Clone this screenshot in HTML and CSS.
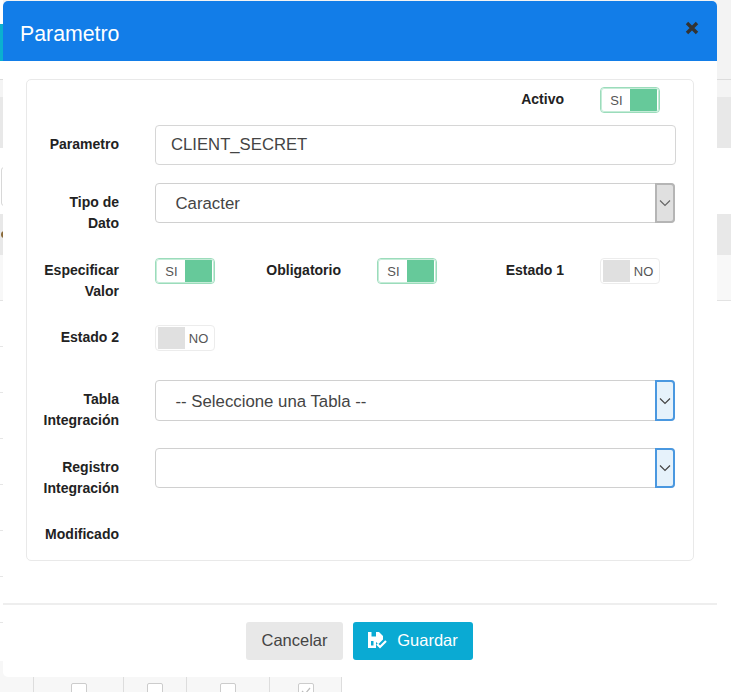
FILE: index.html
```html
<!DOCTYPE html>
<html lang="en">
<head>
  <meta charset="UTF-8">
  <meta name="viewport" content="width=device-width, initial-scale=1.0">
  <title>Parametro</title>
  <link rel="stylesheet" href="styles.css">
</head>
<body>
  <!-- page behind the modal -->
  <div class="backdrop">
    <div class="band band-top">
      <div class="left-strip"><div class="teal-tab"></div></div>
    </div>
    <div class="band band-sub"></div>
    <div class="band band-head"></div>
    <div class="band band-filter"><div class="filter-input"></div></div>
    <div class="band band-head"><span class="status-dot"></span></div>
    <div class="band band-light"></div>
    <div class="table-rows">
      <div class="table-row"></div>
      <div class="table-row"></div>
      <div class="table-row"></div>
      <div class="table-row"></div>
      <div class="table-row"></div>
      <div class="table-row"></div>
      <div class="table-row"></div>
      <div class="table-row"></div>
    </div>
    <div class="check-row">
      <div class="check-cell cell-first"></div>
      <div class="check-cell cell-a"><span class="check-box"></span></div>
      <div class="check-cell cell-b"><span class="check-box"></span></div>
      <div class="check-cell cell-c"><span class="check-box"></span></div>
      <div class="check-cell cell-d">
        <span class="check-box">
          <svg width="14" height="14" viewBox="0 0 14 14"><path d="M3 7l3 3 5-6" fill="none" stroke="#bbb" stroke-width="1.2"/></svg>
        </span>
      </div>
    </div>
  </div>

  <div class="modal">
    <header class="modal-header">
      <h1>Parametro</h1>
      <svg class="close-icon" width="14" height="14" viewBox="0 0 14 14">
        <path d="M2 2l10 10M12 2L2 12" fill="none" stroke="#333" stroke-width="3.4"/>
      </svg>
    </header>

    <div class="modal-body">
      <form class="panel">
        <label class="field-label inline col-3">Activo</label>
        <div class="toggle on"><span>SI</span><i></i></div>

        <label class="field-label row-start">Parametro</label>
        <input class="text-input wide" type="text" value="CLIENT_SECRET">

        <label class="field-label row-start">Tipo de<br>Dato</label>
        <div class="select wide">
          <span class="select-value">Caracter</span>
          <span class="select-arrow">
            <svg width="12" height="8" viewBox="0 0 12 8"><path d="M1 1.5l5 5 5-5" fill="none" stroke="#666" stroke-width="1.2"/></svg>
          </span>
        </div>

        <label class="field-label inline row-start">Especificar Valor</label>
        <div class="toggle on"><span>SI</span><i></i></div>
        <label class="field-label inline">Obligatorio</label>
        <div class="toggle on"><span>SI</span><i></i></div>
        <label class="field-label inline">Estado 1</label>
        <div class="toggle off"><i></i><span>NO</span></div>

        <label class="field-label inline row-start">Estado 2</label>
        <div class="toggle off"><i></i><span>NO</span></div>

        <label class="field-label row-start">Tabla Integración</label>
        <div class="select wide active tall">
          <span class="select-value">-- Seleccione una Tabla --</span>
          <span class="select-arrow">
            <svg width="12" height="8" viewBox="0 0 12 8"><path d="M1 1.5l5 5 5-5" fill="none" stroke="#444" stroke-width="1.2"/></svg>
          </span>
        </div>

        <label class="field-label row-start">Registro Integración</label>
        <div class="select wide active">
          <span class="select-value"></span>
          <span class="select-arrow">
            <svg width="12" height="8" viewBox="0 0 12 8"><path d="M1 1.5l5 5 5-5" fill="none" stroke="#444" stroke-width="1.2"/></svg>
          </span>
        </div>

        <label class="field-label last row-start">Modificado</label>
      </form>
    </div>

    <footer class="modal-footer">
      <button class="btn btn-cancel" type="button">Cancelar</button>
      <button class="btn btn-save" type="button">
        <svg width="20" height="17" viewBox="0 0 20 17">
          <path fill="#fff" fill-rule="evenodd" d="M0 0h11l4 4v3.500l-4.500 4.500L8 10v6H0zM3.500 0v4.500H8V0zM3 9v4.500h2.500V9z"/>
          <path d="M9 12l3 3 6-6" fill="none" stroke="#fff" stroke-width="2.200"/>
        </svg>
        Guardar
      </button>
    </footer>
  </div>
</body>
</html>
```

FILE: styles.css
```css
* {
  box-sizing: border-box;
}

html, body {
  margin: 0;
  padding: 0;
}

body {
  position: relative;
  width: 731px;
  height: 692px;
  overflow: hidden;
  font-family: "Liberation Sans", Arial, sans-serif;
  background-color: #ffffff;
  color: #333;
}

/* page behind the modal */
.backdrop {
  display: flex;
  flex-direction: column;
  height: 692px;
}

.band-top {
  height: 80px;
  background-color: #f3f3f3;
  border-bottom: 1px solid #dcdcdc;
}

.left-strip {
  width: 3px;
  height: 79px;
  padding-top: 24px;
  background-color: #ffffff;
}

.teal-tab {
  height: 37px;
  background-color: #0bb0cf;
}

.band-sub {
  height: 17px;
  background-color: #f4f4f4;
}

.band-head {
  height: 51px;
  background-color: #e8e8e8;
}

.band-filter {
  height: 66px;
  padding-top: 19px;
  background-color: #ffffff;
}

.filter-input {
  width: 40px;
  height: 39px;
  margin-left: 1px;
  border: 1px solid #d8d8d8;
  border-radius: 3px;
}

.band-head:nth-child(5) {
  height: 41px;
  padding-top: 17px;
}

.status-dot {
  display: block;
  width: 7px;
  height: 7px;
  margin-left: 1px;
  border-radius: 50%;
  background-color: #8a6a3a;
}

.band-light {
  height: 46px;
  background-color: #f8f8f8;
  border-bottom: 1px solid #e3e3e3;
}

.table-rows {
  width: 342px;
}

.table-row {
  height: 46px;
  border-bottom: 1px solid #e6e6e6;
}

.check-row {
  display: flex;
  width: 342px;
  height: 31px;
  margin-top: -8px;
  background-color: #f7f7f7;
}

.check-cell {
  display: flex;
  justify-content: center;
  padding-top: 22px;
  border-left: 1px solid #dddddd;
}

.cell-first { width: 33px; border-left: none; }
.cell-a { width: 90px; }
.cell-b { width: 63px; }
.cell-c { width: 83px; }
.cell-d { width: 73px; border-right: 1px solid #dddddd; }

.check-box {
  display: block;
  width: 16px;
  height: 16px;
  background-color: #ffffff;
  border: 1px solid #cccccc;
  border-radius: 2px;
}

.check-box svg {
  display: block;
}

/* modal */
.modal {
  position: absolute;
  left: 3px;
  top: 1px;
  width: 714px;
  height: 676px;
  display: flex;
  flex-direction: column;
  background-color: #ffffff;
  border-radius: 5px;
}

.modal-header {
  display: flex;
  align-items: center;
  justify-content: space-between;
  height: 60px;
  padding: 0 18px 0 17px;
  background-color: #127de8;
  border-radius: 5px 5px 0 0;
}

.modal-header h1 {
  margin: 6px 0 0 0;
  font-size: 21.300px;
  font-weight: normal;
  color: #ffffff;
}

.close-icon {
  margin: 0 0 6px 0;
}

.modal-body {
  padding: 18px 23px 42px 23px;
}

.panel {
  display: grid;
  grid-template-columns: 128px 60px 162px 60px 163px 60px 15px;
  grid-template-rows: 38px 58px 75px 67px 55px 68px 76px auto;
  padding: 7px 0 15.500px 0;
  border: 1px solid #e9e9e9;
  border-radius: 5px;
}

.field-label {
  padding: 9px 36px 0 0;
  font-size: 14px;
  font-weight: bold;
  line-height: 20.500px;
  text-align: right;
  color: #222;
}

.field-label.inline {
  padding-top: 2px;
}

.field-label.last {
  padding-top: 0;
}

.row-start {
  grid-column: 1;
}

.col-3 {
  grid-column: 5;
}

.wide {
  grid-column: 2 / -1;
}

/* switches */
.toggle {
  display: flex;
  align-items: center;
  width: 60px;
  height: 26px;
  padding: 2px;
  border-radius: 4px;
  font-size: 13px;
  color: #555;
}

.toggle i {
  display: block;
  width: 27px;
  height: 22px;
}

.toggle span {
  flex: 1;
  text-align: center;
}

.toggle.on {
  border: 1px solid #9bdcbb;
  outline: 1px solid #c5ecd8;
  outline-offset: -2px;
}

.toggle.on i {
  background-color: #66c99a;
}

.toggle.off {
  border: 1px solid #ececec;
}

.toggle.off i {
  background-color: #e0e0e0;
}

/* inputs */
.text-input {
  width: 521px;
  height: 40px;
  padding: 0 15px;
  font-family: inherit;
  font-size: 16.700px;
  color: #444;
  background-color: #ffffff;
  border: 1px solid #d6d6d6;
  border-radius: 4px;
}

.select {
  display: flex;
  width: 520px;
  height: 40px;
  border: 1px solid #d0d0d0;
  border-radius: 4px;
  font-size: 16.800px;
  color: #444;
}

.select.tall {
  height: 41px;
}

.select-value {
  flex: 1;
  padding: 0 0 0 19.500px;
  line-height: 40px;
}

.select.tall .select-value {
  line-height: 41px;
}

.select-arrow {
  display: flex;
  align-items: center;
  justify-content: center;
  width: 20px;
  background-color: #e0e0e0;
  border: 2px solid #b5b5b5;
  border-radius: 0 4px 4px 0;
  margin: -1px -1px -1px 0;
}

.select.active .select-arrow {
  background-color: #e6f2fb;
  border-color: #4a98e0;
}

/* footer */
.modal-footer {
  display: flex;
  justify-content: center;
  gap: 10px;
  padding: 17px 1px 0 0;
  border-top: 2px solid #eeeeee;
}

.btn {
  display: flex;
  align-items: center;
  justify-content: center;
  height: 38px;
  padding: 0 0 2px 0;
  font-family: inherit;
  font-size: 16.500px;
  border: none;
  border-radius: 3px;
  cursor: pointer;
}

.btn-cancel {
  width: 97px;
  background-color: #e8e8e8;
  color: #444;
}

.btn-save {
  width: 120px;
  gap: 9px;
  background-color: #0aaad3;
  color: #ffffff;
}
```
